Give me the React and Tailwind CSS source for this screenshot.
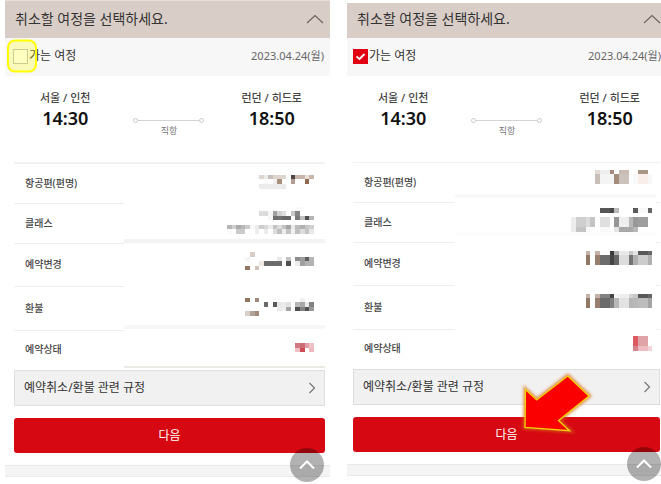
import { useState } from 'react'
import clsx from 'clsx'

// Masked values: every band is [y, height, [x, width, colour], ...]
const maskedLeft = [
  [
    [11, 4, [135, 5, '#dfd6d1'], [140, 4, '#ebebeb'], [144, 5, '#c8c0bd'], [149, 13, '#dfd5cf'], [167, 4, '#4d4644'], [171, 10, '#cab5ac'], [181, 4, '#e9ded8'], [185, 5, '#c9b4a8']],
    [15, 5, [140, 4, '#fafafa'], [149, 4, '#f3f1ef'], [153, 5, '#a8907f'], [167, 4, '#b39c92'], [181, 4, '#8f6950']],
    [20, 5, [135, 27, '#ebebeb']],
  ],
  [
    [3, 4, [171, 5, '#f8f8f8'], [176, 5, '#fcfcfc']],
    [7, 5, [135, 9, '#dcdcdc'], [144, 5, '#f6f6f6'], [149, 4, '#a0a0a0'], [153, 5, '#d0d0d0'], [158, 4, '#dedede'], [167, 4, '#c8c8c8'], [171, 5, '#858585']],
    [12, 4, [144, 5, '#f7f7f7'], [149, 4, '#6c6c6c'], [153, 5, '#707070'], [158, 9, '#666666'], [171, 5, '#7c7c7c'], [176, 5, '#c0c0c0'], [181, 4, '#505050'], [185, 5, '#b4b4b4']],
    [21, 4, [103, 5, '#b8b8b8'], [108, 4, '#cfcfcf'], [112, 5, '#acacac'], [117, 4, '#b9b9b9'], [121, 5, '#cacaca'], [126, 5, '#f8f8f8'], [131, 4, '#eaeaea'], [135, 5, '#cecece'], [140, 4, '#dadada'], [144, 5, '#ececec'], [149, 4, '#c4c4c4'], [153, 5, '#dcdcdc'], [158, 4, '#c4c4c4'], [162, 5, '#a4a4a4'], [167, 4, '#ebebeb'], [171, 5, '#bbbbbb'], [176, 5, '#b0b0b0'], [181, 4, '#c6c6c6'], [185, 5, '#cfcfcf']],
    [25, 5, [103, 5, '#fafafa'], [112, 9, '#cacaca'], [131, 4, '#ececec'], [140, 4, '#ececec'], [149, 4, '#dddddd'], [153, 5, '#c0c0c0'], [158, 4, '#ececec'], [162, 5, '#c4c4c4'], [167, 4, '#f0f0f0'], [171, 5, '#c0c0c0'], [176, 5, '#dddddd'], [181, 4, '#c4c4c4'], [185, 5, '#e8e8e8']],
    [35, 4, [0, 201, '#f3f3f3']],
  ],
  [
    [8, 5, [126, 5, '#d8cdc6']],
    [13, 4, [121, 5, '#f4f4f4'], [153, 5, '#e9e9e9'], [162, 5, '#c4c4c4'], [171, 5, '#8c8c8c'], [176, 5, '#9c9c9c'], [181, 4, '#5e5e5e'], [185, 5, '#b5b5b5']],
    [17, 5, [135, 5, '#efe8e2'], [140, 18, '#6b6b6b'], [162, 5, '#505050'], [171, 5, '#ededed'], [176, 5, '#a0a0a0'], [181, 9, '#b2b2b2']],
    [22, 4, [121, 5, '#8f7562'], [131, 4, '#d0c2b8']],
  ],
  [
    [11, 4, [121, 5, '#8f7562'], [131, 4, '#a28b7c'], [176, 5, '#f0f0f0']],
    [15, 5, [140, 4, '#6a6a6a'], [149, 4, '#5a5a5a'], [153, 5, '#e8e8e8'], [158, 4, '#ececec'], [162, 5, '#e2e2e2'], [171, 5, '#b8b8b8'], [176, 5, '#a8a8a8'], [181, 4, '#eaeaea'], [185, 5, '#808080']],
    [20, 4, [153, 5, '#eaeaea'], [158, 4, '#efefef'], [162, 5, '#a4a4a4'], [171, 5, '#505050'], [176, 5, '#858585'], [181, 4, '#505050'], [185, 5, '#999999']],
    [24, 5, [121, 5, '#dacfc7'], [126, 5, '#b0a498'], [131, 4, '#a28b7c']],
    [38, 4, [0, 201, '#f7f7f7']],
  ],
  [
    [12, 5, [171, 5, '#cd7a80'], [176, 5, '#cb6c74'], [181, 4, '#dfa0a6'], [185, 5, '#edc2c6']],
    [17, 4, [171, 5, '#efc0c5'], [176, 5, '#cc4b55'], [185, 5, '#eeb8be']],
    [35, 2, [0, 201, '#ebeae5']],
  ],
]

const maskedRight = [
  [
    [7, 4, [140, 5, '#e3dad4'], [145, 10, '#efefef'], [155, 4, '#a38c7b'], [164, 10, '#cbbcb3'], [183, 10, '#a99686']],
    [11, 10, [140, 5, '#c8bfbb'], [145, 14, '#f4f4f4'], [159, 5, '#a38c7b'], [164, 10, '#cbc2be'], [178, 5, '#faf9f9'], [183, 10, '#f9eeea'], [193, 4, '#f7f7f7']],
    [31, 4, [0, 201, '#f8f8f8']],
    [39, 1, [201, 4, '#eeeeee']],
  ],
  [
    [5, 5, [145, 10, '#565656'], [155, 4, '#4a4a4a'], [159, 5, '#bababa'], [178, 5, '#5a5a5a'], [183, 10, '#f8f8f8'], [193, 4, '#666666']],
    [14, 10, [116, 5, '#ededed'], [121, 10, '#cfcfcf'], [131, 4, '#dcdcdc'], [135, 5, '#c4c4c4'], [145, 10, '#dfdfdf'], [159, 5, '#959595'], [164, 10, '#eeeeee'], [174, 4, '#b8b8b8'], [178, 5, '#989898'], [183, 10, '#9e9e9e']],
    [24, 5, [116, 5, '#ececec'], [121, 10, '#c4c4c4'], [131, 4, '#f8f8f8'], [145, 10, '#f8f8f8'], [159, 5, '#e4e4e4'], [164, 14, '#a8a8a8'], [178, 5, '#b8b8b8']],
    [29, 4, [0, 201, '#fcfcfc']],
    [39, 1, [201, 4, '#eeeeee']],
  ],
  [
    [8, 4, [131, 4, '#c4b2a8'], [140, 5, '#c4b2a8'], [155, 4, '#3a3a3a'], [159, 5, '#b0b0b0'], [164, 10, '#e8e8e8'], [174, 4, '#c8c8c8'], [178, 5, '#e4e4e4'], [183, 10, '#585858'], [193, 4, '#666666']],
    [12, 10, [131, 4, '#907765'], [140, 5, '#987e6c'], [145, 10, '#6c6c6c'], [155, 4, '#444444'], [159, 5, '#666666'], [164, 10, '#dcdcdc'], [174, 4, '#747474'], [178, 5, '#b0b0b0'], [183, 10, '#cccccc'], [193, 4, '#b0b0b0']],
    [42, 1, [201, 4, '#eeeeee']],
  ],
  [
    [8, 4, [131, 4, '#c4b2a8'], [140, 5, '#c4b2a8'], [145, 10, '#828282'], [155, 4, '#444444'], [159, 5, '#f6f6f6'], [164, 10, '#eeeeee'], [174, 4, '#d4d4d4'], [178, 5, '#c8c8c8'], [183, 10, '#585858'], [193, 4, '#666666']],
    [12, 10, [131, 4, '#907765'], [140, 5, '#987e6c'], [145, 10, '#6a6a6a'], [155, 4, '#808080'], [159, 5, '#b8b8b8'], [164, 10, '#e2e2e2'], [174, 4, '#b4b4b4'], [178, 5, '#b8b8b8'], [183, 10, '#bcbcbc'], [193, 4, '#a4a4a4']],
    [43, 1, [201, 4, '#eeeeee']],
  ],
  [
    [6, 10, [178, 5, '#de5a62'], [183, 10, '#dfa3a8']],
    [16, 5, [178, 5, '#d4858c'], [183, 10, '#ecbcc1'], [193, 4, '#f2d5d8']],
  ],
]

const rows = [
  { label: '항공편(편명)', height: 40, className: 'h-10' },
  { label: '클래스', height: 40, className: 'h-10' },
  { label: '예약변경', height: 43, className: 'h-[43px]' },
  { label: '환불', height: 44, className: 'h-11' },
  { label: '예약상태', height: 37, className: 'h-[37px]' },
]

function Mosaic({ bands, width, height }) {
  return (
    <svg width={width} height={height} className="block max-w-none" shapeRendering="crispEdges" aria-hidden="true">
      {bands.map(([y, h, ...cells]) =>
        cells.map(([x, w, fill]) => <rect key={`${x}-${y}`} x={x} y={y} width={w} height={h} fill={fill} />)
      )}
    </svg>
  )
}

function Airport({ name, time }) {
  return (
    <div className="text-center">
      <div className="text-[11px] leading-4 font-medium text-[#444]">{name}</div>
      <div className="text-lg leading-6 font-semibold text-[#111]">{time}</div>
    </div>
  )
}

function Arrow() {
  return (
    <svg
      viewBox="515 366 86 76"
      className="absolute left-1/2 -top-[51px] ml-2 w-[86px] h-[76px] pointer-events-none"
      aria-hidden="true"
    >
      <defs>
        <filter id="glow" x="-20%" y="-20%" width="140%" height="140%">
          <feGaussianBlur stdDeviation="1.6" />
        </filter>
      </defs>
      <path
        d="M525 427.500L525.500 389.500L536.700 400L567.700 376L589 396L558.500 420.500L569.500 430.700Z"
        fill="#e07020"
        stroke="#d9701c"
        strokeWidth="4"
        opacity="0.75"
        filter="url(#glow)"
      />
      <path
        d="M525 427.500L525.500 389.500L536.700 400L567.700 376L589 396L558.500 420.500L569.500 430.700Z"
        fill="#fb0000"
        stroke="#f2d400"
        strokeWidth="1.300"
      />
    </svg>
  )
}

function TripPanel({ id, cropped, defaultChecked, masked, maskWidth }) {
  const [checked, setChecked] = useState(defaultChecked)

  return (
    <section className="min-w-0">
      <header
        className={clsx(
          'flex items-center justify-between bg-[#d9cdc8] pl-[10px]',
          cropped ? 'mt-[3px] h-[35px] pb-[3px]' : 'h-[38px] border-t border-[#e6dfdc] pb-0.5 pr-1.5'
        )}
      >
        <h2 className="text-sm text-[#333]">취소할 여정을 선택하세요.</h2>
        <button type="button" aria-label="접기">
          <svg width="18" height="10" viewBox="0 0 18 10" fill="none" stroke="#70645f" strokeWidth="1.200">
            <path d="M1 9L9 1.500L17 9" />
          </svg>
        </button>
      </header>

      <div
        className={clsx(
          'flex h-[38px] items-center justify-between bg-[#f7f7f7] pb-0.5',
          cropped ? 'pl-1.5' : 'pl-2 pr-1.5'
        )}
      >
        <div className="relative flex items-center">
          <span className="relative flex">
            <input
              id={id}
              type="checkbox"
              checked={checked}
              onChange={(e) => setChecked(e.target.checked)}
              className="block size-[15px] appearance-none border border-[#bbb] bg-white checked:border-[#e00012] checked:bg-[#e00012]"
            />
            {checked && (
              <svg
                viewBox="0 0 15 15"
                className="pointer-events-none absolute inset-0 size-[15px]"
                fill="none"
                stroke="#fff"
                strokeWidth="1.800"
              >
                <path d="M3.500 7.500L6.500 10L11.500 5" />
              </svg>
            )}
          </span>
          <label htmlFor={id} className="pl-px text-xs text-[#333]">
            가는 여정
          </label>
          {!cropped && (
            <span className="pointer-events-none absolute -left-[6px] top-1/2 h-[33px] w-[30px] -translate-y-1/2 rounded-lg border-2 border-[#ffff00] bg-[#ffff00]/25" />
          )}
        </div>
        <span className="text-[11px] text-[#666]">2023.04.24(월)</span>
      </div>

      <div className={clsx('flex h-[86px] pt-3.5', cropped ? 'pl-[31px] pr-[21px]' : 'pl-[35px] pr-[28px]')}>
        <Airport name="서울 / 인천" time="14:30" />
        <div className="flex flex-1 flex-col items-center pl-1.5 pt-7">
          <div className="flex w-[71px] items-center">
            <span className="size-[5px] rounded-full border border-[#ccc]" />
            <span className="h-px flex-1 bg-[#d4d4d4]" />
            <span className="size-[5px] rounded-full border border-[#ccc]" />
          </div>
          <span className="text-[9px] leading-4 text-[#777]">직항</span>
        </div>
        <Airport name="런던 / 히드로" time="18:50" />
      </div>

      <div className={cropped ? 'pl-1.5 pr-px' : 'pl-[9px] pr-[5px]'}>
        <table
          className={clsx(
            'w-full border-separate border-spacing-0 border-[#f1f1f1]',
            cropped ? 'border-t' : 'border-t-2'
          )}
        >
          <tbody>
            {rows.map((row, i) => (
              <tr key={row.label} className={row.className}>
                <th
                  scope="row"
                  className={clsx(
                    'p-0 pb-0.5 pl-[11px] text-left text-[10px] leading-4 font-medium whitespace-nowrap text-[#444]',
                    i < rows.length - 1 && 'border-b border-[#eee]'
                  )}
                >
                  {row.label}
                </th>
                <td className="w-px p-0">
                  <Mosaic bands={masked[i]} width={maskWidth} height={row.height} />
                </td>
              </tr>
            ))}
          </tbody>
        </table>

        <button
          type="button"
          className="mt-0.5 flex h-9 w-full items-center justify-between border border-[#dedede] bg-[#f1f1f1] pl-[9px] pr-2 text-xs text-[#333]"
        >
          예약취소/환불 관련 규정
          <svg width="8" height="12" viewBox="0 0 8 12" fill="none" stroke="#777" strokeWidth="1.200">
            <path d="M1.500 1L6.500 6L1.500 11" />
          </svg>
        </button>

        <div className="relative mt-3">
          <button type="button" className="block h-[35px] w-full rounded-[3px] bg-[#d60812] text-xs text-white">
            다음
          </button>
          {cropped && <Arrow />}
        </div>
      </div>

      <div className="relative mt-3 h-3 border-y border-[#e9e9e9] bg-[#f4f4f4]">
        <button
          type="button"
          aria-label="맨 위로"
          className={clsx(
            'absolute -top-[18px] flex size-[34px] items-center justify-center rounded-full bg-black/30',
            cropped ? 'right-0' : 'right-1.5'
          )}
        >
          <svg width="16" height="10" viewBox="0 0 16 10" fill="none" stroke="#fff" strokeWidth="2">
            <path d="M1 8.500L8 1.500L15 8.500" />
          </svg>
        </button>
      </div>
    </section>
  )
}

export default function App() {
  return (
    <main className="grid min-h-screen grid-cols-[325fr_314fr] items-start gap-[17px] bg-white pb-2 pl-[5px] font-['Noto_Sans','Noto_Sans_CJK_KR',sans-serif]">
      <TripPanel id="trip-before" defaultChecked={false} masked={maskedLeft} maskWidth={201} />
      <TripPanel id="trip-after" cropped defaultChecked masked={maskedRight} maskWidth={205} />
    </main>
  )
}
